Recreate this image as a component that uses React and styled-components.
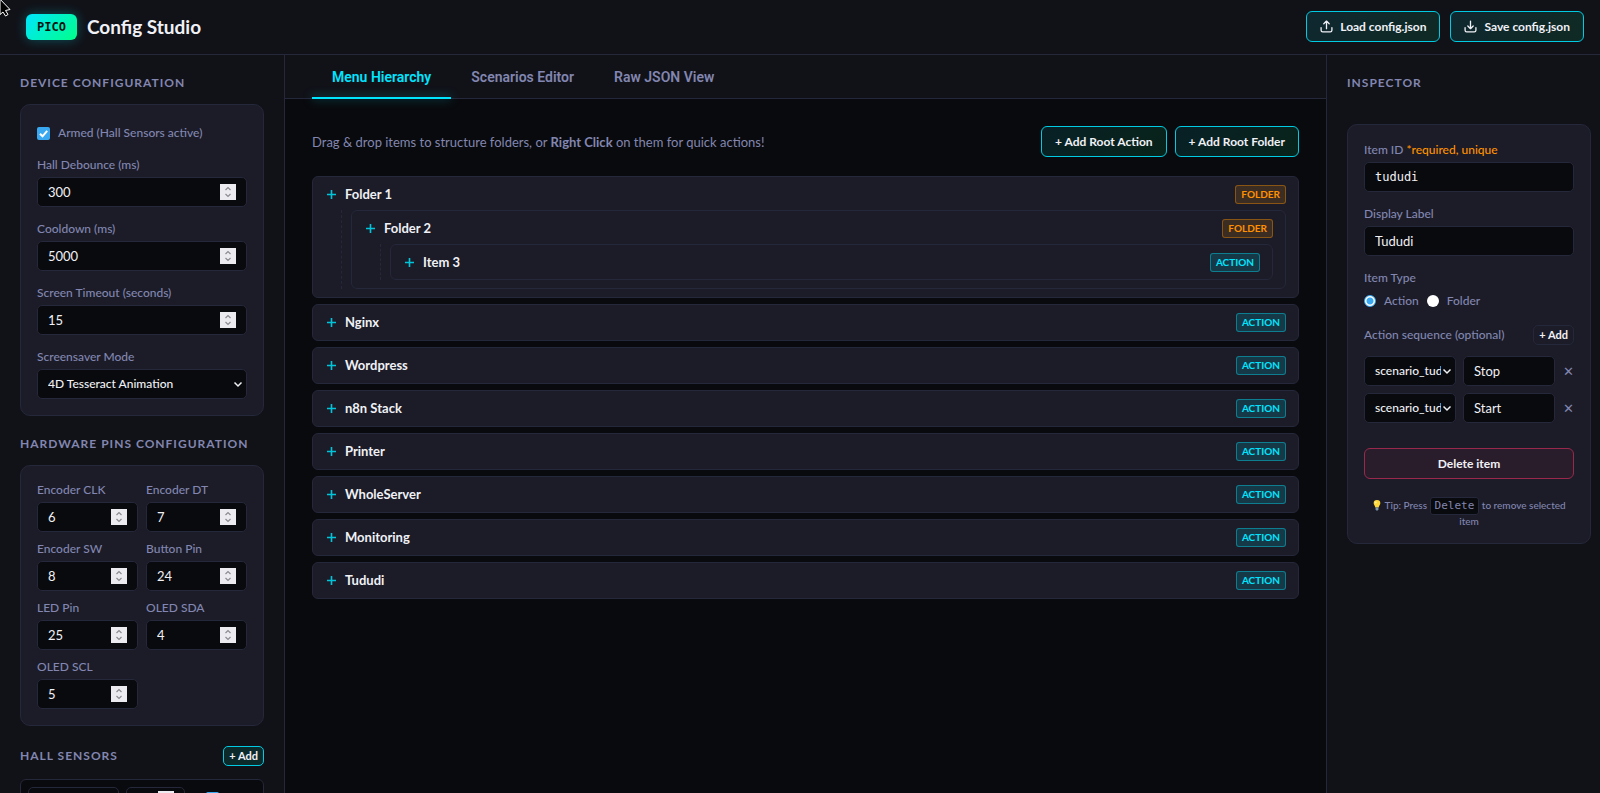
import React, {useState} from 'react';
import styled, {createGlobalStyle, css} from 'styled-components';

const c = {
	bg: '#090a0d',
	panel: '#111218',
	card: '#1b1c28',
	line: '#25273a',
	text: '#f0f1f6',
	muted: '#8286b0',
	cyan: '#00e5ff',
	orange: '#ff9100',
	blue: '#3aa8f0',
};

const mono = `'DejaVu Sans Mono', 'Liberation Mono', monospace`;

const svgUrl = (size, d, stroke, width) =>
	`url("data:image/svg+xml,${encodeURIComponent(
		`<svg xmlns='http://www.w3.org/2000/svg' viewBox='0 0 ${size} ${size}' fill='none' stroke='${stroke}' stroke-width='${width}'><path d='${d}'/></svg>`
	)}")`;

const spinner = svgUrl(16, 'M5.500 6L8 3.500 10.500 6M5.500 10L8 12.500 10.500 10', '#8b8b92', 1.2);
const chevron = svgUrl(10, 'M1.500 3.500L5 7 8.500 3.500', '#f0f1f6', 1.5);
const check = svgUrl(13, 'M3 6.800L5.500 9.300 10.200 3.800', '#ffffff', 2);

const tabs = ['Menu Hierarchy', 'Scenarios Editor', 'Raw JSON View'];

const menu = [
	{
		label: 'Folder 1',
		children: [{label: 'Folder 2', children: [{label: 'Item 3'}]}],
	},
	{label: 'Nginx'},
	{label: 'Wordpress'},
	{label: 'n8n Stack'},
	{label: 'Printer'},
	{label: 'WholeServer'},
	{label: 'Monitoring'},
	{label: 'Tududi'},
];

const pins = [
	['Encoder CLK', 6],
	['Encoder DT', 7],
	['Encoder SW', 8],
	['Button Pin', 24],
	['LED Pin', 25],
	['OLED SDA', 4],
	['OLED SCL', 5],
];

function TransferIcon({up}) {
	return (
		<svg
			width='13'
			height='13'
			viewBox='0 0 24 24'
			fill='none'
			stroke='currentColor'
			strokeWidth='2.4'
			strokeLinecap='round'
			strokeLinejoin='round'
			aria-hidden='true'
		>
			<path d='M2 14v5a3 3 0 0 0 3 3h14a3 3 0 0 0 3-3v-5' />
			<path d={up ? 'M7 7l5-5 5 5M12 2v14' : 'M7 11l5 5 5-5M12 16V2'} />
		</svg>
	);
}

function NumberField({id, label, value}) {
	return (
		<Field>
			<Label htmlFor={id}>{label}</Label>
			<NumberInput id={id} type='number' defaultValue={value} />
		</Field>
	);
}

function TreeItem({item, nested}) {
	return (
		<Item $nested={nested} $leaf={!item.children}>
			<ItemHead>
				<Plus viewBox='0 0 13 13' aria-hidden='true'>
					<path d='M6.5 2v9M2 6.5h9' />
				</Plus>
				<ItemName>{item.label}</ItemName>
				<Badge $folder={!!item.children}>
					{item.children ? 'FOLDER' : 'ACTION'}
				</Badge>
			</ItemHead>
			{item.children && (
				<Children>
					{item.children.map((child) => (
						<TreeItem key={child.label} item={child} nested />
					))}
				</Children>
			)}
		</Item>
	);
}

function Inspector() {
	const [type, setType] = useState('action');

	return (
		<Aside $right>
			<InspectorTitle>Inspector</InspectorTitle>
			<InspectorCard>
				<Field>
					<Label htmlFor='item-id'>
						Item ID <Required>*required, unique</Required>
					</Label>
					<TextInput id='item-id' $mono defaultValue='tududi' />
				</Field>
				<Field>
					<Label htmlFor='item-label'>Display Label</Label>
					<TextInput id='item-label' defaultValue='Tududi' />
				</Field>
				<TypeGroup>
					<Legend>Item Type</Legend>
					<RadioRow>
						<CheckLabel>
							<Radio
								type='radio'
								name='type'
								checked={type === 'action'}
								onChange={() => setType('action')}
							/>
							Action
						</CheckLabel>
						<CheckLabel>
							<Radio
								type='radio'
								name='type'
								checked={type === 'folder'}
								onChange={() => setType('folder')}
							/>
							Folder
						</CheckLabel>
					</RadioRow>
				</TypeGroup>
				<Sequence>
					<SequenceHead>
						<span>Action sequence (optional)</span>
						<SmallButton type='button' $quiet>
							+ Add
						</SmallButton>
					</SequenceHead>
					{['Stop', 'Start'].map((step) => (
						<Step key={step}>
							<Select aria-label={`${step} scenario`}>
								<option>scenario_tududi</option>
							</Select>
							<TextInput aria-label='Step name' defaultValue={step} />
							<Remove type='button' aria-label={`Remove ${step}`}>
								✕
							</Remove>
						</Step>
					))}
				</Sequence>
				<DeleteButton type='button'>Delete item</DeleteButton>
				<Tip>
					<Bulb viewBox='0 0 12 14' aria-hidden='true'>
						<path
							d='M6 1a4 4 0 0 0-4 4c0 2 1.700 2.800 2 5h4c.3-2.200 2-3 2-5a4 4 0 0 0-4-4z'
							fill='#ffd83b'
						/>
						<path d='M4.300 10h3.400v2.500L6.800 13.500H5.200l-.9-1z' fill='#7d98a8' />
						<circle cx='4.500' cy='4' r='1.200' fill='#fff3a8' />
					</Bulb>{' '}
					Tip: Press <Kbd>Delete</Kbd> to remove selected item
				</Tip>
			</InspectorCard>
		</Aside>
	);
}

export default function App() {
	const [active, setActive] = useState(tabs[0]);

	return (
		<Page>
			<GlobalStyle />
			<Header>
				<Logo>PICO</Logo>
				<AppName>Config Studio</AppName>
				<Button type='button'>
					<TransferIcon up />
					Load config.json
				</Button>
				<Button type='button'>
					<TransferIcon />
					Save config.json
				</Button>
			</Header>
			<Body>
				<Aside>
					<Title>Device Configuration</Title>
					<Card>
						<ArmedLabel>
							<Checkbox type='checkbox' defaultChecked />
							Armed (Hall Sensors active)
						</ArmedLabel>
						<NumberField id='debounce' label='Hall Debounce (ms)' value={300} />
						<NumberField id='cooldown' label='Cooldown (ms)' value={5000} />
						<NumberField
							id='timeout'
							label='Screen Timeout (seconds)'
							value={15}
						/>
						<Field>
							<Label htmlFor='screensaver'>Screensaver Mode</Label>
							<Select id='screensaver'>
								<option>4D Tesseract Animation</option>
							</Select>
						</Field>
					</Card>
					<Title>Hardware Pins Configuration</Title>
					<Card>
						<PinGrid>
							{pins.map(([label, value]) => (
								<NumberField
									key={label}
									id={label.replace(' ', '-')}
									label={label}
									value={value}
								/>
							))}
						</PinGrid>
					</Card>
					<TitleRow>
						<Title>Hall Sensors</Title>
						<SmallButton type='button'>+ Add</SmallButton>
					</TitleRow>
					<SensorRow>
						<TextInput aria-label='Sensor name' $small />
						<NumberInput aria-label='Sensor pin' type='number' $small />
						<Checkbox type='checkbox' aria-label='Enabled' defaultChecked />
					</SensorRow>
				</Aside>
				<Main>
					<Tabs role='tablist'>
						{tabs.map((tab) => (
							<Tab
								key={tab}
								type='button'
								role='tab'
								aria-selected={tab === active}
								$active={tab === active}
								onClick={() => setActive(tab)}
							>
								{tab}
							</Tab>
						))}
					</Tabs>
					<Content>
						<Toolbar>
							<Hint>
								Drag &amp; drop items to structure folders, or{' '}
								<b>Right Click</b> on them for quick actions!
							</Hint>
							<Button type='button'>+ Add Root Action</Button>
							<Button type='button'>+ Add Root Folder</Button>
						</Toolbar>
						<Tree>
							{menu.map((item) => (
								<TreeItem key={item.label} item={item} />
							))}
						</Tree>
					</Content>
				</Main>
				<Inspector />
			</Body>
			<Cursor viewBox='0 0 12 18' aria-hidden='true'>
				<path d='M-4-5L10 9.500 5.500 10.500 8 14.500 5.500 16 3 12 0 14.500V-5z' />
			</Cursor>
		</Page>
	);
}

// Styled Components
const GlobalStyle = createGlobalStyle`
	* {
		box-sizing: border-box;
	}

	body {
		margin: 0;
		background: ${c.bg};
		color: ${c.text};
		font-family: Lato, 'Open Sans', sans-serif;
		font-size: 13px;
		line-height: 16px;
	}

	button, input, select {
		font: inherit;
		color: inherit;
	}
`;

const Page = styled.div`
	height: 100vh;
	display: flex;
	flex-direction: column;
	overflow: hidden;
`;

const Header = styled.header`
	display: flex;
	align-items: center;
	gap: 10px;
	padding: 11px 16px 12px 26px;
	background: ${c.panel};
	border-bottom: 1px solid ${c.line};
`;

const Logo = styled.span`
	padding: 5px 11px;
	border-radius: 6px;
	background: linear-gradient(135deg, #00e5ff, #00ff88);
	box-shadow: 0 0 12px rgba(0, 229, 255, 0.3);
	color: #07120f;
	font: 700 12px/16px ${mono};
`;

const AppName = styled.h1`
	flex: 1;
	margin: 0;
	font-size: 19px;
	font-weight: 700;
	line-height: 24px;
`;

const Button = styled.button`
	display: inline-flex;
	align-items: center;
	justify-content: center;
	gap: 7px;
	height: 31px;
	padding: 0 13px;
	border: 1px solid #00cbe2;
	border-radius: 6px;
	background: linear-gradient(
		135deg,
		rgba(0, 229, 255, 0.1),
		rgba(0, 255, 136, 0.1)
	);
	font-size: 12px;
	font-weight: 700;
	white-space: nowrap;
	cursor: pointer;
`;

const Body = styled.div`
	flex: 1;
	min-height: 0;
	display: grid;
	grid-template-columns: 285px minmax(0, 1fr) 274px;
`;

const Aside = styled.aside`
	padding: 20px;
	overflow: hidden;
	background: ${c.panel};
	border-right: 1px solid ${c.line};

	${(p) =>
		p.$right &&
		css`
			padding-right: 9px;
			border-right: none;
			border-left: 1px solid ${c.line};
		`}
`;

const Title = styled.h2`
	margin: 0 0 13px;
	color: ${c.muted};
	font-size: 12px;
	font-weight: 700;
	line-height: 16px;
	letter-spacing: 1px;
	text-transform: uppercase;
`;

const InspectorTitle = styled(Title)`
	margin-bottom: 33px;
`;

const TitleRow = styled.div`
	display: flex;
	align-items: center;
	justify-content: space-between;
	margin-bottom: 13px;

	${Title} {
		margin: 0;
	}
`;

const Card = styled.section`
	display: flex;
	flex-direction: column;
	gap: 14px;
	margin-bottom: 20px;
	padding: 16px;
	background: ${c.card};
	border: 1px solid ${c.line};
	border-radius: 10px;
`;

const InspectorCard = styled(Card)`
	padding-top: 17px;
`;

const Field = styled.div`
	display: flex;
	flex-direction: column;
	gap: 4px;
	min-width: 0;
`;

const Label = styled.label`
	color: ${c.muted};
	font-size: 12px;
	font-weight: 500;
	line-height: 16px;
`;

const Required = styled.span`
	color: ${c.orange};
`;

const control = css`
	width: 100%;
	min-width: 0;
	height: ${(p) => (p.$small ? '23px' : '30px')};
	padding: 0 10px;
	background: ${c.bg};
	border: 1px solid ${c.line};
	border-radius: 5px;
	font-size: 13px;
	outline: none;

	&:focus {
		border-color: ${c.cyan};
	}
`;

const TextInput = styled.input`
	${control}
	${(p) =>
		p.$mono &&
		css`
			font-family: ${mono};
			font-size: 12px;
		`}
`;

const NumberInput = styled.input`
	${control}

	&::-webkit-inner-spin-button {
		appearance: none;
		width: 16px;
		height: 16px;
		opacity: 1;
		background: #ececf0 ${spinner};
	}
`;

const Select = styled.select`
	${control}
	appearance: none;
	padding: 0 14px 0 10px;
	background: ${c.bg} ${chevron} no-repeat right 3px center / 10px;
	font-size: 12px;
	font-weight: 500;
`;

const CheckLabel = styled.label`
	display: flex;
	align-items: center;
	gap: 8px;
	color: ${c.muted};
	font-size: 12px;
	font-weight: 500;
`;

const ArmedLabel = styled(CheckLabel)`
	height: 22px;
	padding-top: 2px;
`;

const Checkbox = styled.input`
	appearance: none;
	width: 13px;
	height: 13px;
	margin: 0;
	border-radius: 2px;
	background: #fff;

	&:checked {
		background: ${c.blue} ${check};
	}
`;

const Radio = styled.input`
	appearance: none;
	width: 12px;
	height: 12px;
	margin: 0;
	border-radius: 50%;
	background: #fff;

	&:checked {
		border: 1px solid ${c.blue};
		background: radial-gradient(circle, ${c.blue} 3px, #fff 4px);
	}
`;

const PinGrid = styled.div`
	display: grid;
	grid-template-columns: 1fr 1fr;
	gap: 9px 8px;
`;

const SmallButton = styled.button`
	height: 20px;
	padding: 0 5px;
	border: 1px solid ${(p) => (p.$quiet ? c.line : '#00cbe2')};
	border-radius: 5px;
	background: ${(p) => (p.$quiet ? 'transparent' : '#0d2a2b')};
	font-size: 11px;
	font-weight: 700;
	line-height: 16px;
	cursor: pointer;
`;

const SensorRow = styled.div`
	display: grid;
	grid-template-columns: 91px 59px 27px;
	gap: 7px;
	align-items: center;
	padding: 7px;
	background: ${c.bg};
	border: 1px solid ${c.line};
	border-radius: 6px;

	${Checkbox} {
		justify-self: end;
	}
`;

const Main = styled.main`
	display: flex;
	flex-direction: column;
	min-width: 0;
`;

const Tabs = styled.nav`
	display: flex;
	height: 44px;
	padding: 0 27px;
	background: ${c.panel};
	border-bottom: 1px solid ${c.line};
`;

const Tab = styled.button`
	position: relative;
	height: 44px;
	padding: 0 20px;
	border: none;
	background: none;
	color: ${(p) => (p.$active ? c.cyan : c.muted)};
	font-family: Roboto, Inter, sans-serif;
	font-size: 14px;
	font-weight: 600;
	cursor: pointer;

	/* glowing underline over the bar's border */
	&::after {
		content: '';
		display: ${(p) => (p.$active ? 'block' : 'none')};
		position: absolute;
		inset: auto 0 0;
		height: 2px;
		background: ${c.cyan};
		box-shadow: 0 0 10px rgba(0, 229, 255, 0.5);
	}
`;

const Content = styled.div`
	padding: 27px;
`;

const Toolbar = styled.div`
	display: flex;
	align-items: center;
	gap: 8px;
	margin-bottom: 19px;
`;

const Hint = styled.p`
	flex: 1;
	margin: 0;
	color: ${c.muted};
`;

const Tree = styled.ul`
	display: flex;
	flex-direction: column;
	gap: 6px;
	margin: 0;
	padding: 0;
	list-style: none;
`;

const Item = styled.li`
	padding: 8px 12px;
	padding-bottom: ${(p) => (p.$nested && p.$leaf ? '7px' : '8px')};
	background: ${c.card};
	border: 1px solid ${c.line};
	border-radius: 6px;
`;

const ItemHead = styled.div`
	display: flex;
	align-items: center;
	gap: 7px;
`;

const Plus = styled.svg`
	width: 13px;
	height: 13px;
	fill: none;
	stroke: #00c4da;
	stroke-width: 1.6;
`;

const ItemName = styled.span`
	flex: 1;
	padding-bottom: 2px;
	font-weight: 700;
`;

const Badge = styled.span`
	padding: 0 5px;
	border: 1px solid
		${(p) => (p.$folder ? 'rgba(255, 145, 0, .4)' : 'rgba(0, 229, 255, .4)')};
	border-radius: 3px;
	background: ${(p) =>
		p.$folder ? 'rgba(255, 145, 0, .15)' : 'rgba(0, 229, 255, .15)'};
	color: ${(p) => (p.$folder ? c.orange : c.cyan)};
	font-size: 10px;
	font-weight: 700;
	line-height: 17px;
`;

const Children = styled.ul`
	margin: 6px 0 0 16px;
	padding: 0 0 0 9px;
	border-left: 1px dashed ${c.line};
	list-style: none;
`;

const TypeGroup = styled.fieldset`
	margin: 0;
	padding: 0;
	border: none;
`;

const Legend = styled.legend`
	padding: 0;
	color: ${c.muted};
	font-size: 12px;
	font-weight: 500;
`;

const RadioRow = styled.div`
	display: flex;
	gap: 8px;
	margin-top: 7px;
`;

const SequenceHead = styled.div`
	display: flex;
	align-items: center;
	justify-content: space-between;
	margin-bottom: 4px;
	color: ${c.muted};
	font-size: 12px;
	font-weight: 500;

	${SmallButton} {
		color: ${c.text};
	}
`;

const Sequence = styled.div`
	display: flex;
	flex-direction: column;
	gap: 7px;
	margin: 2px 0 11px;
`;

const Step = styled.div`
	display: grid;
	grid-template-columns: 1fr 1fr 12px;
	gap: 7px;
	align-items: center;
`;

const Remove = styled.button`
	padding: 0;
	border: none;
	background: none;
	color: ${c.muted};
	font-size: 13px;
	cursor: pointer;
`;

const DeleteButton = styled(Button)`
	border-color: #99294c;
	background: #2a1d2b;
`;

const Tip = styled.p`
	margin: 4px 0 0;
	color: ${c.muted};
	font-size: 10px;
	font-weight: 500;
	line-height: 12px;
	text-align: center;
`;

const Bulb = styled.svg`
	width: 10px;
	height: 12px;
	vertical-align: -2px;
`;

const Kbd = styled.kbd`
	display: inline-block;
	padding: 1px 4px;
	border: 1px solid ${c.line};
	border-radius: 3px;
	background: ${c.bg};
	font: 11px/14px ${mono};
`;

// mouse pointer lying over the page corner
const Cursor = styled.svg`
	position: absolute;
	top: 0;
	left: 0;
	width: 12px;
	height: 18px;
	fill: #000;
	stroke: #fff;
	stroke-width: 1;
	pointer-events: none;
`;
